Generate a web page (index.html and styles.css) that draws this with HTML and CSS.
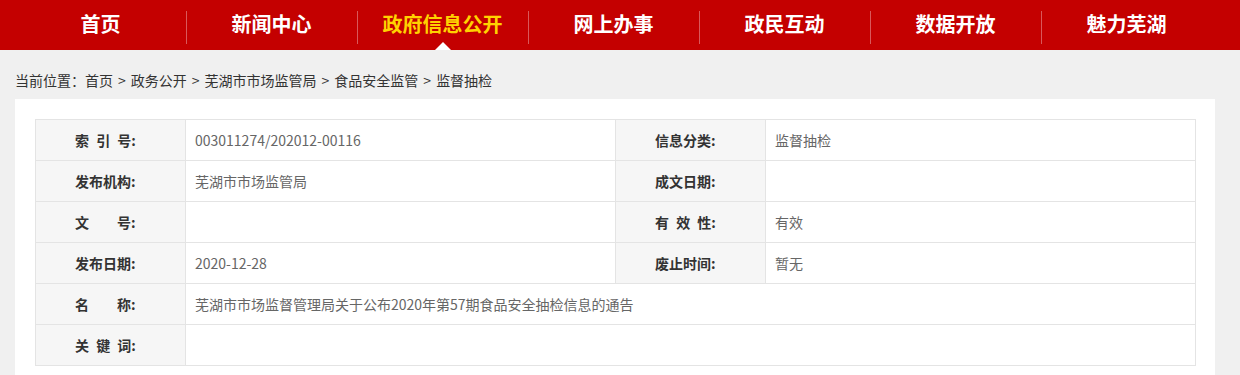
FILE: index.html
```html
<!DOCTYPE html>
<html lang="zh-CN">
<head>
<meta charset="utf-8">
<title>监督抽检</title>
<link rel="stylesheet" href="styles.css">
</head>
<body>
<div class="nav">
  <ul class="nav-list">
    <li class="nav-item"><a>首页</a></li>
    <li class="nav-item"><a>新闻中心</a></li>
    <li class="nav-item active"><a>政府信息公开</a></li>
    <li class="nav-item"><a>网上办事</a></li>
    <li class="nav-item"><a>政民互动</a></li>
    <li class="nav-item"><a>数据开放</a></li>
    <li class="nav-item"><a>魅力芜湖</a></li>
  </ul>
</div>
<div class="crumb">当前位置：首页<span class="sep">&gt;</span>政务公开<span class="sep">&gt;</span>芜湖市市场监管局<span class="sep">&gt;</span>食品安全监管<span class="sep">&gt;</span>监督抽检</div>
<div class="panel">
  <table class="meta">
    <colgroup><col class="c-label"><col class="c-val"><col class="c-label"><col class="c-val"></colgroup>
    <tr>
      <th>索 引 号:</th><td>003011274/202012-00116</td>
      <th>信息分类:</th><td>监督抽检</td>
    </tr>
    <tr>
      <th>发布机构:</th><td>芜湖市市场监管局</td>
      <th>成文日期:</th><td></td>
    </tr>
    <tr>
      <th>文　　号:</th><td></td>
      <th>有 效 性:</th><td>有效</td>
    </tr>
    <tr>
      <th>发布日期:</th><td>2020-12-28</td>
      <th>废止时间:</th><td>暂无</td>
    </tr>
    <tr>
      <th>名　　称:</th><td colspan="3">芜湖市市场监督管理局关于公布2020年第57期食品安全抽检信息的通告</td>
    </tr>
    <tr>
      <th>关 键 词:</th><td colspan="3"></td>
    </tr>
  </table>
</div>
</body>
</html>
```

FILE: styles.css
```css
* { box-sizing: border-box; }
html, body {
  margin: 0;
  padding: 0;
  background: #f0f0f0;
  font-family: "Noto Sans CJK SC", "Microsoft YaHei", sans-serif;
  color: #333;
}
.nav {
  height: 50px;
  background: #c40000;
}
.nav-list {
  list-style: none;
  margin: 0;
  padding: 0 0 0 15px;
  display: flex;
  height: 50px;
}
.nav-item {
  width: 171px;
  height: 50px;
  display: flex;
  align-items: center;
  justify-content: center;
  position: relative;
}
.nav-item + .nav-item::before {
  content: "";
  position: absolute;
  left: 0;
  top: 11px;
  height: 33px;
  border-left: 1px solid #d9585a;
}
.nav-item a {
  color: #fff;
  font-size: 20px;
  font-weight: bold;
  line-height: 24px;
  margin-top: -2px;
}
.nav-item.active a { color: #ffd200; }
.nav-item.active::after {
  content: "";
  position: absolute;
  left: 50%;
  bottom: 0;
  margin-left: -8px;
  border-left: 8px solid transparent;
  border-right: 8px solid transparent;
  border-bottom: 8px solid #fff;
}
.crumb {
  height: 49px;
  padding: 19px 0 0 15px;
  font-size: 14px;
  line-height: 22px;
  color: #333;
}
.crumb .sep {
  padding: 0 5px;
}
.panel {
  width: 1200px;
  margin-left: 15px;
  background: #fff;
  padding: 20px 20px 20px;
}
.meta {
  width: 1160px;
  border-collapse: collapse;
  table-layout: fixed;
}
.c-label { width: 150px; }
.c-val { width: 430px; }
.meta th, .meta td {
  height: 41px;
  border: 1px solid #e4e4e4;
  font-size: 14px;
  padding: 0;
  vertical-align: middle;
}
.meta th {
  background: #f6f6f6;
  text-align: left;
  padding-left: 39px;
  font-weight: bold;
  color: #333;
  white-space: pre;
  word-spacing: 4px;
}
.meta td {
  padding-left: 9px;
  color: #666;
}
```
